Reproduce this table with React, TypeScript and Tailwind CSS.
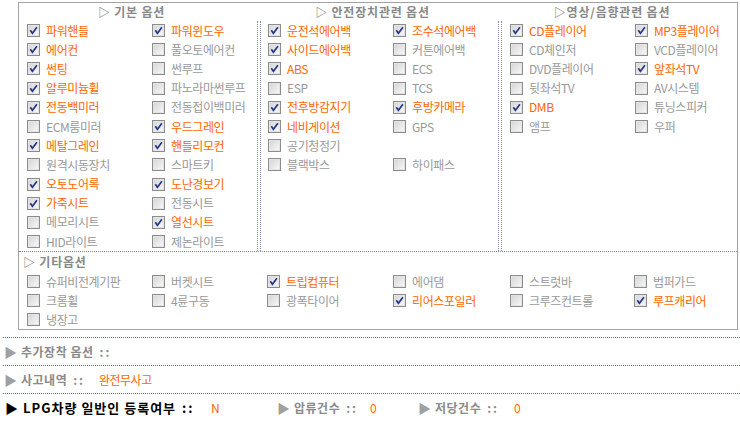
import React from "react";

type Opt = [string, boolean];

const basic: Opt[] = [
  ["파워핸들", true], ["파워윈도우", true],
  ["에어컨", true], ["풀오토에어컨", false],
  ["썬팅", true], ["썬루프", false],
  ["알루미늄휠", true], ["파노라마썬루프", false],
  ["전동백미러", true], ["전동접이백미러", false],
  ["ECM룸미러", false], ["우드그레인", true],
  ["메탈그레인", true], ["핸들리모컨", true],
  ["원격시동장치", false], ["스마트키", false],
  ["오토도어록", true], ["도난경보기", true],
  ["가죽시트", true], ["전동시트", false],
  ["메모리시트", false], ["열선시트", true],
  ["HID라이트", false], ["제논라이트", false],
];

const safety: Opt[] = [
  ["운전석에어백", true], ["조수석에어백", true],
  ["사이드에어백", true], ["커튼에어백", false],
  ["ABS", true], ["ECS", false],
  ["ESP", false], ["TCS", false],
  ["전후방감지기", true], ["후방카메라", true],
  ["네비게이션", true], ["GPS", false],
  ["공기청정기", false], ["", false],
  ["블랙박스", false], ["하이패스", false],
];

const media: Opt[] = [
  ["CD플레이어", true], ["MP3플레이어", true],
  ["CD체인저", false], ["VCD플레이어", false],
  ["DVD플레이어", false], ["앞좌석TV", true],
  ["뒷좌석TV", false], ["AV시스템", false],
  ["DMB", true], ["튜닝스피커", false],
  ["앰프", false], ["우퍼", false],
];

const etc: Opt[][] = [
  [["슈퍼비전계기판", false], ["크롬휠", false], ["냉장고", false]],
  [["버켓시트", false], ["4륜구동", false]],
  [["트립컴퓨터", true], ["광폭타이어", false]],
  [["에어댐", false], ["리어스포일러", true]],
  [["스트럿바", false], ["크루즈컨트롤", false]],
  [["범퍼가드", false], ["루프캐리어", true]],
];

function Check({ on }: { on: boolean }) {
  return (
    <svg width="13" height="13" viewBox="0 0 13 13" className="shrink-0">
      <defs>
        <linearGradient id="cbg" x1="0" y1="0" x2="1" y2="1">
          <stop offset="0" stopColor="#d2d2d2" />
          <stop offset="1" stopColor="#fbfbfb" />
        </linearGradient>
      </defs>
      <rect x="0.5" y="0.5" width="12" height="12" fill="url(#cbg)" stroke="#8c8c8c" />
      <rect x="1.5" y="1.5" width="10" height="10" fill="none" stroke="#e4e4e4" />
      {on && (
        <path d="M3.3 6.3 L5.4 9.2 L9.9 3.2" fill="none" stroke="#24368a" strokeWidth="1.7" />
      )}
    </svg>
  );
}

function Item({ opt, h = "h-[19.2px]" }: { opt: Opt; h?: string }) {
  const [label, on] = opt;
  if (!label) return <div className={h} />;
  return (
    <div className={`flex items-center gap-[6px] ${h}`}>
      <Check on={on} />
      <span className={on ? "text-[#ff6600]" : "text-[#999999]"}>{label}</span>
    </div>
  );
}

function Col({ items, className }: { items: Opt[]; className: string }) {
  return (
    <div className={`grid grid-cols-[125px_1fr] content-start ${className}`}>
      {items.map((o, i) => (
        <Item key={i} opt={o} />
      ))}
    </div>
  );
}

function Header({ children }: { children: React.ReactNode }) {
  return (
    <div className="flex h-[18px] items-center justify-center pr-[14px] text-[12px] font-bold tracking-[0.8px] text-[#888888]">
      {children}
    </div>
  );
}

function Dots() {
  return <div className="ml-[3px] w-[737px] border-t border-dotted border-[#5f6e90]" />;
}

function Arrow({ dark }: { dark?: boolean }) {
  return (
    <span className={`mr-[4px] text-[13px] ${dark ? "text-black" : "text-[#a0a0a0]"}`}>▶</span>
  );
}

export default function App() {
  return (
    <div className="h-[423px] w-[740px] overflow-hidden bg-white font-['Noto_Sans_CJK_KR',sans-serif] text-[12px] tracking-[-0.4px]">
      <div className="pl-[18px] pt-[2px]">
        <div className="w-[720px] border border-[#a3a3a3]">
          {/* headers */}
          <div className="grid grid-cols-[239px_239px_236px] gap-x-[2px]">
            <Header>▷ 기본 옵션</Header>
            <Header>▷ 안전장치관련 옵션</Header>
            <Header>▷영상/음향관련 옵션</Header>
          </div>

          {/* option columns */}
          <div className="grid grid-cols-[239px_239px_236px] gap-x-[2px] border-b border-dotted border-[#7d8aa8]">
            <Col items={basic} className="border-r border-dotted border-[#7d8aa8] pl-[8px]" />
            <Col items={safety} className="border-x border-dotted border-[#7d8aa8] pl-[7px]" />
            <Col items={media} className="border-l border-dotted border-[#7d8aa8] pl-[8px]" />
          </div>

          {/* 기타옵션 */}
          <div className="flex h-[20px] items-center pl-[4px] font-bold tracking-[0.8px] text-[#888888]">
            ▷ 기타옵션
          </div>
          <div className="grid grid-cols-[125px_116px_125px_116px_125px_111px] pl-[8px]">
            {etc.map((col, i) => (
              <div key={i} className={i === 2 ? "-ml-[1px]" : i === 4 ? "ml-[1px]" : ""}>
                {col.map((o, j) => (
                  <Item key={j} opt={o} h="h-[19px]" />
                ))}
              </div>
            ))}
          </div>
        </div>
      </div>

      {/* lower info */}
      <div className="mt-[7px] tracking-normal">
        <Dots />
        <div className="flex h-[27px] items-center pl-[4px] font-bold text-[#8a8a8a]">
          <Arrow />
          <span className="tracking-[0.5px]">추가장착 옵션</span>
          <span className="ml-[6px] tracking-[2px]">::</span>
        </div>
        <Dots />
        <div className="flex h-[27px] items-center pl-[4px]">
          <span className="inline-flex w-[95px] items-center font-bold text-[#8a8a8a]">
            <Arrow />
            <span className="tracking-[0.5px]">사고내역</span>
            <span className="ml-[6px] tracking-[2px]">::</span>
          </span>
          <span className="tracking-[-0.5px] text-[#ff6600]">완전무사고</span>
        </div>
        <Dots />
        <div className="flex h-[27px] items-center pl-[5px]">
          <div className="flex w-[272px] items-center">
            <span className="inline-flex w-[206px] items-center text-[13px] font-bold tracking-[1px] text-black">
              <Arrow dark />
              LPG차량 일반인 등록여부
              <span className="ml-[6px] tracking-[2px]">::</span>
            </span>
            <span className="text-[#ff6600]">N</span>
          </div>
          <div className="flex w-[141px] items-center">
            <span className="inline-flex w-[93px] items-center font-bold text-[#8a8a8a]">
              <Arrow />
              <span className="tracking-[0.5px]">압류건수</span>
              <span className="ml-[6px] tracking-[2px]">::</span>
            </span>
            <span className="text-[#ff6600]">0</span>
          </div>
          <div className="flex items-center">
            <span className="inline-flex w-[96px] items-center font-bold text-[#8a8a8a]">
              <Arrow />
              <span className="tracking-[0.5px]">저당건수</span>
              <span className="ml-[6px] tracking-[2px]">::</span>
            </span>
            <span className="text-[#ff6600]">0</span>
          </div>
        </div>
      </div>
    </div>
  );
}
